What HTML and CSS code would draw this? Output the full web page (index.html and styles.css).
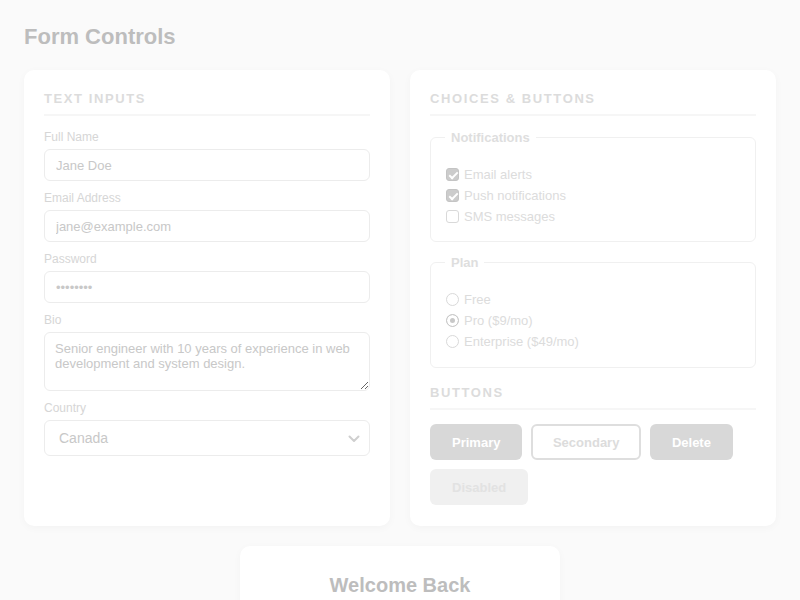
FILE: index.html
```html
<!DOCTYPE html>
<html lang="en">
<head>
<meta charset="utf-8">
<title>Form Controls</title>
<link rel="stylesheet" href="styles.css">
</head>
<body>
<main class="page">
  <h1 class="page-title">Form Controls</h1>
  <div class="grid">
    <section class="card">
      <h2 class="section-title">Text Inputs</h2>
      <div class="field">
        <label class="label" for="name">Full Name</label>
        <input class="input" id="name" type="text" value="Jane Doe">
      </div>
      <div class="field">
        <label class="label" for="email">Email Address</label>
        <input class="input" id="email" type="email" value="jane@example.com">
      </div>
      <div class="field">
        <label class="label" for="pw">Password</label>
        <input class="input" id="pw" type="password" value="secret12">
      </div>
      <div class="field">
        <label class="label" for="bio">Bio</label>
        <textarea class="input textarea" id="bio">Senior engineer with 10 years of experience in web development and system design.</textarea>
      </div>
      <div class="field">
        <label class="label" for="country">Country</label>
        <div class="select-wrap">
          <select class="input select" id="country">
            <option>Canada</option>
            <option>United States</option>
          </select>
          <svg class="chevron" width="12" height="8" viewBox="0 0 12 8"><path d="M1.5 1.5 6 6l4.5-4.5" fill="none" stroke="#cfcfcf" stroke-width="2" stroke-linecap="round" stroke-linejoin="round"/></svg>
        </div>
      </div>
    </section>
    <section class="card">
      <h2 class="section-title">Choices &amp; Buttons</h2>
      <fieldset class="group">
        <legend class="legend">Notifications</legend>
        <label class="choice"><input class="check" type="checkbox" checked> Email alerts</label>
        <label class="choice"><input class="check" type="checkbox" checked> Push notifications</label>
        <label class="choice"><input class="check" type="checkbox"> SMS messages</label>
      </fieldset>
      <fieldset class="group group-last">
        <legend class="legend">Plan</legend>
        <label class="choice"><input class="radio" type="radio" name="plan"> Free</label>
        <label class="choice"><input class="radio" type="radio" name="plan" checked> Pro ($9/mo)</label>
        <label class="choice"><input class="radio" type="radio" name="plan"> Enterprise ($49/mo)</label>
      </fieldset>
      <h2 class="section-title">Buttons</h2>
      <div class="buttons">
        <button class="btn btn-primary">Primary</button>
        <button class="btn btn-secondary">Secondary</button>
        <button class="btn btn-danger">Delete</button>
        <button class="btn btn-disabled" disabled>Disabled</button>
      </div>
    </section>
  </div>
  <section class="card login">
    <h2 class="login-title">Welcome Back</h2>
  </section>
</main>
</body>
</html>
```

FILE: styles.css
```css
* { box-sizing: border-box; }
html, body { margin: 0; }
body {
  background: #fafafa;
  font-family: "Liberation Sans", Arial, sans-serif;
  color: #d4d4d4;
}
.page {
  padding: 24px 24px 0;
}
.page-title {
  margin: 0 0 20px;
  font-size: 22px;
  line-height: 26px;
  font-weight: 700;
  color: #bdbdbd;
}
.grid {
  display: grid;
  grid-template-columns: 1fr 1fr;
  gap: 20px;
}
.card {
  background: #fff;
  border-radius: 10px;
  padding: 20px 20px 21px;
  box-shadow: 0 2px 8px rgba(0,0,0,0.03);
}
.section-title {
  margin: 0 0 14px;
  padding-top: 1px;
  padding-bottom: 7px;
  border-bottom: 2px solid #f6f6f6;
  font-size: 13px;
  line-height: 16px;
  font-weight: 700;
  letter-spacing: 1.6px;
  text-transform: uppercase;
  color: #dcdcdc;
}
.field {
  display: flex;
  flex-direction: column;
  margin-bottom: 10px;
}
.label {
  font-size: 12px;
  line-height: 15px;
  margin-bottom: 4px;
  color: #d6d6d6;
}
.input {
  height: 32px;
  border: 1px solid #ececec;
  border-radius: 6px;
  padding: 0 11px;
  font-family: inherit;
  font-size: 13px;
  color: #c8c8c8;
  background: #fff;
  outline: none;
}
.textarea {
  height: 59px;
  padding: 8px 10px;
  line-height: 15px;
  resize: vertical;
}
.select-wrap {
  position: relative;
}
.select {
  width: 100%;
  height: 36px;
  padding: 0 14px;
  font-size: 14px;
  appearance: none;
  -webkit-appearance: none;
}
.chevron {
  position: absolute;
  right: 10px;
  top: 15px;
}
.group {
  margin: 0 0 13px;
  padding: 23px 14px 18px;
  border: 1px solid #f0f0f0;
  border-radius: 6px;
  display: flex;
  flex-direction: column;
  gap: 8px;
}
.group-last {
  margin-bottom: 16px;
  padding-bottom: 19px;
}
.legend {
  padding: 0 6px;
  font-size: 13px;
  line-height: 15px;
  font-weight: 700;
  color: #dedede;
}
.choice {
  display: flex;
  align-items: center;
  gap: 5px;
  font-size: 13px;
  line-height: 13px;
  color: #dcdcdc;
}
.check, .radio {
  appearance: none;
  -webkit-appearance: none;
  margin: 0 0 0 1px;
  width: 13px;
  height: 13px;
  flex: none;
  border: 1px solid #d9d9d9;
  background: #fff;
  position: relative;
}
.check {
  border-radius: 3px;
}
.check:checked {
  background: #cccccc;
  border-color: #c4c4c4;
}
.check:checked::after {
  content: "";
  position: absolute;
  left: 3.5px;
  top: 1px;
  width: 3px;
  height: 7px;
  border: solid #fff;
  border-width: 0 2px 2px 0;
  transform: rotate(45deg);
}
.radio {
  border-radius: 50%;
}
.radio:checked {
  border-color: #c8c8c8;
  background: #c8c8c8;
  box-shadow: inset 0 0 0 3px #fff;
}
.buttons {
  display: flex;
  flex-wrap: wrap;
  gap: 9px;
}
.btn {
  height: 36px;
  padding: 0 22px;
  border: 0;
  border-radius: 6px;
  font-family: inherit;
  font-size: 13px;
  font-weight: 700;
  color: #fff;
  background: #d8d8d8;
}
.btn-secondary {
  background: #fff;
  border: 2px solid #dedede;
  color: #dcdcdc;
  padding: 0 19.5px;
}
.btn-disabled {
  background: #f0f0f0;
  color: #e2e2e2;
}
.login {
  width: 320px;
  margin: 20px auto 0;
  padding: 27px 20px;
  text-align: center;
}
.login-title {
  margin: 0;
  font-size: 20px;
  line-height: 24px;
  font-weight: 700;
  color: #bdbdbd;
}
```
